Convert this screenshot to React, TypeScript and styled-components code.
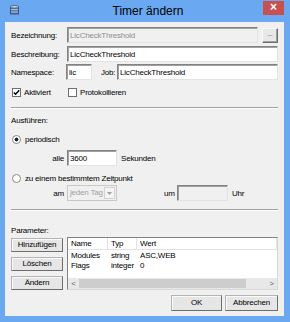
import React from 'react';
import styled, { createGlobalStyle } from 'styled-components';

const GlobalStyle = createGlobalStyle`
  html, body {
    margin: 0;
    padding: 0;
    background: #ffffff;
  }
  body {
    font-family: "Liberation Sans", Arial, sans-serif;
    font-size: 8px;
    letter-spacing: -0.2px;
    color: #000;
  }
`;

const params = [
  { name: 'Modules', type: 'string', value: 'ASC,WEB' },
  { name: 'Flags', type: 'integer', value: '0' },
];

const App: React.FC = () => {
  return (
    <>
      <GlobalStyle />
      <Window>
        <TitleBar>
          <AppIcon width="9" height="10" viewBox="0 0 9 10">
            <rect x="0.5" y="1.5" width="8" height="7.5" fill="#5f7fa8" stroke="#3d5273" strokeWidth="1" />
            <ellipse cx="4.5" cy="1.8" rx="4" ry="1.3" fill="#c9d6e6" stroke="#3d5273" strokeWidth="0.8" />
            <rect x="1" y="4" width="7" height="1" fill="#9fc0e8" />
            <rect x="1" y="6.5" width="7" height="1" fill="#9fc0e8" />
          </AppIcon>
          <Title>Timer ändern</Title>
          <CloseButton>×</CloseButton>
        </TitleBar>

        <Client>
          <FieldRow $top={5}>
            <Label $width={56}>Bezeichnung:</Label>
            <TextBox readOnly disabled value="LicCheckThreshold" />
            <SmallButton>...</SmallButton>
          </FieldRow>

          <FieldRow $top={3}>
            <Label $width={56}>Beschreibung:</Label>
            <TextBox readOnly value="LicCheckThreshold" />
          </FieldRow>

          <FieldRow $top={2}>
            <Label $width={55}>Namespace:</Label>
            <TextBox readOnly value="lic" $width={26} />
            <Label $width={16} $left={9}>Job:</Label>
            <TextBox readOnly value="LicCheckThreshold" />
          </FieldRow>

          <CheckRow>
            <CheckItem $width={56}>
              <CheckBox>
                <svg width="7" height="7" viewBox="0 0 7 7">
                  <path d="M0.8 3.4 L2.6 5.3 L6.2 1.2" fill="none" stroke="#000" strokeWidth="1.4" />
                </svg>
              </CheckBox>
              Aktiviert
            </CheckItem>
            <CheckItem>
              <CheckBox />
              Protokollieren
            </CheckItem>
          </CheckRow>

          <Separator $top={8} />

          <SectionLabel $top={7}>Ausführen:</SectionLabel>

          <RadioRow $top={7}>
            <Radio $checked />
            periodisch
          </RadioRow>

          <FieldRow $top={5}>
            <Label $width={56} $align="right">alle</Label>
            <TextBox readOnly value="3600" $width={50} />
            <Label $left={4}>Sekunden</Label>
          </FieldRow>

          <RadioRow $top={6}>
            <Radio />
            zu einem bestimmtem Zeitpunkt
          </RadioRow>

          <FieldRow $top={1}>
            <Label $width={56} $align="right">am</Label>
            <Combo>
              <ComboText>jeden Tag</ComboText>
              <ComboArrow>
                <svg width="5" height="3" viewBox="0 0 5 3">
                  <path d="M0 0 L5 0 L2.5 3 Z" fill="#a0a0a0" />
                </svg>
              </ComboArrow>
            </Combo>
            <Label $left={47} $width={13}>um</Label>
            <TextBox readOnly disabled value="" $width={51} />
            <Label $left={4}>Uhr</Label>
          </FieldRow>

          <Separator $top={8} />

          <SectionLabel $top={15}>Parameter:</SectionLabel>

          <ParamArea>
            <ButtonColumn>
              <SideButton>Hinzufügen</SideButton>
              <SideButton>Löschen</SideButton>
              <SideButton>Ändern</SideButton>
            </ButtonColumn>

            <ListView>
              <ListHeader>
                <HeaderCell $width={40}>Name</HeaderCell>
                <HeaderCell $width={29}>Typ</HeaderCell>
                <HeaderCell>Wert</HeaderCell>
              </ListHeader>
              <ListBody>
                {params.map(p => (
                  <ListRow key={p.name}>
                    <Cell $width={40}>{p.name}</Cell>
                    <Cell $width={29}>{p.type}</Cell>
                    <Cell>{p.value}</Cell>
                  </ListRow>
                ))}
              </ListBody>
              <HScroll>
                <ScrollArrow>&lt;</ScrollArrow>
                <ScrollThumb />
                <ScrollTrack />
                <ScrollArrow>&gt;</ScrollArrow>
              </HScroll>
            </ListView>
          </ParamArea>

          <Footer>
            <DialogButton $width={51}>OK</DialogButton>
            <DialogButton $width={53}>Abbrechen</DialogButton>
          </Footer>
        </Client>
      </Window>
    </>
  );
};

const Window = styled.div`
  width: 290px;
  height: 322px;
  box-sizing: border-box;
  background: #6aa9f1;
  display: flex;
  flex-direction: column;
  padding: 0 6px 6px 5px;
`;

const TitleBar = styled.div`
  height: 22px;
  display: flex;
  align-items: flex-start;
  flex-shrink: 0;
`;

const AppIcon = styled.svg`
  margin: 5px 0 0 5px;
  flex-shrink: 0;
`;

const Title = styled.div`
  flex: 1;
  text-align: center;
  font-size: 12px;
  letter-spacing: 0;
  line-height: 12px;
  padding: 5px 0 0 14px;
  color: #000;
`;

const CloseButton = styled.div`
  width: 21px;
  height: 14px;
  margin-top: 1px;
  background: #c75050;
  color: #fff;
  font-size: 12px;
  letter-spacing: 0;
  line-height: 13px;
  font-weight: bold;
  text-align: center;
`;

const Client = styled.div`
  flex: 1;
  background: #f0f0f0;
  padding: 0 6px 0 6px;
  display: flex;
  flex-direction: column;
`;

const FieldRow = styled.div<{ $top: number }>`
  display: flex;
  align-items: center;
  height: 16px;
  margin-top: ${p => p.$top}px;
`;

const Label = styled.span<{ $width?: number; $left?: number; $align?: string }>`
  flex-shrink: 0;
  width: ${p => (p.$width ? `${p.$width}px` : 'auto')};
  margin-left: ${p => p.$left || 0}px;
  padding-right: ${p => (p.$align === 'right' ? 3 : 0)}px;
  box-sizing: border-box;
  text-align: ${p => p.$align || 'left'};
  white-space: nowrap;
`;

const TextBox = styled.input<{ $width?: number }>`
  box-sizing: border-box;
  height: 16px;
  min-width: 0;
  flex: ${p => (p.$width ? `0 0 ${p.$width}px` : '1')};
  width: ${p => (p.$width ? `${p.$width}px` : 'auto')};
  margin: 0;
  padding: 0 2px;
  font: inherit;
  letter-spacing: inherit;
  color: #000;
  background: #fff;
  border: 1px solid;
  border-color: #828282 #e3e3e3 #e3e3e3 #828282;
  box-shadow: inset 1px 1px 0 #a0a0a0;
  outline: none;

  &:disabled {
    background: #f0f0f0;
    color: #8d8d8d;
  }
`;

const SmallButton = styled.div`
  box-sizing: border-box;
  width: 16px;
  height: 15px;
  margin-left: 4px;
  align-self: flex-end;
  background: #e8e8e8;
  border: 1px solid;
  border-color: #f8f8f8 #6d6d6d #6d6d6d #f8f8f8;
  box-shadow: inset -1px -1px 0 #a0a0a0;
  font-size: 7px;
  line-height: 9px;
  text-align: center;
  color: #555;
`;

const CheckRow = styled.div`
  display: flex;
  align-items: center;
  height: 14px;
  margin-top: 5px;
`;

const CheckItem = styled.label<{ $width?: number }>`
  display: flex;
  align-items: center;
  width: ${p => (p.$width ? `${p.$width}px` : 'auto')};
  white-space: nowrap;
`;

const CheckBox = styled.span`
  box-sizing: border-box;
  width: 9px;
  height: 9px;
  margin: 0 3px 0 1px;
  display: flex;
  align-items: center;
  justify-content: center;
  background: #fff;
  border: 1px solid #6f6f6f;
`;

const Separator = styled.div<{ $top: number }>`
  margin-top: ${p => p.$top}px;
  height: 0;
  border-top: 1px solid #a0a0a0;
  border-bottom: 1px solid #ffffff;
`;

const SectionLabel = styled.div<{ $top: number }>`
  margin-top: ${p => p.$top}px;
  height: 10px;
  line-height: 10px;
`;

const RadioRow = styled.div<{ $top: number }>`
  display: flex;
  align-items: center;
  height: 12px;
  margin-top: ${p => p.$top}px;
  white-space: nowrap;
`;

const Radio = styled.span<{ $checked?: boolean }>`
  box-sizing: border-box;
  width: 9px;
  height: 9px;
  margin: 0 4px 0 1px;
  border-radius: 50%;
  border: 1px solid #8a8a8a;
  background: ${p => (p.$checked ? 'radial-gradient(circle, #222 0 1.8px, #fff 2.2px)' : '#fff')};
`;

const Combo = styled.div`
  box-sizing: border-box;
  width: 50px;
  height: 16px;
  display: flex;
  align-items: stretch;
  background: #f0f0f0;
  border: 1px solid #c8c8c8;
`;

const ComboText = styled.span`
  flex: 1;
  min-width: 0;
  padding-left: 2px;
  line-height: 14px;
  color: #a0a0a0;
  white-space: nowrap;
`;

const ComboArrow = styled.span`
  flex: 0 0 11px;
  margin: 1px;
  box-sizing: border-box;
  display: flex;
  align-items: center;
  justify-content: center;
  border: 1px solid #d2d2d2;
  background: #f4f4f4;
`;

const ParamArea = styled.div`
  display: flex;
  margin-top: 1px;
  gap: 4px;
`;

const ButtonColumn = styled.div`
  width: 52px;
  display: flex;
  flex-direction: column;
  gap: 5px;
  padding-top: 1px;
`;

const ButtonBase = styled.div`
  box-sizing: border-box;
  background: #e6e6e6;
  border: 1px solid;
  border-color: #b4b4b4 #6d6d6d #6d6d6d #b4b4b4;
  box-shadow: inset 1px 1px 0 #fafafa;
  text-align: center;
  white-space: nowrap;
`;

const SideButton = styled(ButtonBase)`
  height: 14px;
  line-height: 12px;
`;

const ListView = styled.div`
  flex: 1;
  height: 53px;
  box-sizing: border-box;
  display: flex;
  flex-direction: column;
  background: #fff;
  border: 1px solid;
  border-color: #828282 #d8d8d8 #d8d8d8 #828282;
`;

const ListHeader = styled.div`
  display: flex;
  height: 11px;
  border-bottom: 1px solid #e2e2e2;
`;

const HeaderCell = styled.div<{ $width?: number }>`
  box-sizing: border-box;
  width: ${p => (p.$width ? `${p.$width}px` : 'auto')};
  flex: ${p => (p.$width ? '0 0 auto' : '1')};
  padding-left: 3px;
  line-height: 11px;
  border-right: 1px solid #e2e2e2;
`;

const ListBody = styled.div`
  flex: 1;
  padding-top: 1px;
`;

const ListRow = styled.div`
  display: flex;
  height: 10px;
  line-height: 10px;
`;

const Cell = styled.div<{ $width?: number }>`
  width: ${p => (p.$width ? `${p.$width}px` : 'auto')};
  flex: ${p => (p.$width ? '0 0 auto' : '1')};
  padding-left: 3px;
  box-sizing: border-box;
  white-space: nowrap;
`;

const HScroll = styled.div`
  display: flex;
  height: 11px;
  background: #e8e8e8;
`;

const ScrollArrow = styled.div`
  width: 11px;
  line-height: 11px;
  text-align: center;
  font-size: 8px;
  color: #606060;
`;

const ScrollThumb = styled.div`
  flex: 0 0 167px;
  margin: 1px 0;
  background: #cdcdcd;
`;

const ScrollTrack = styled.div`
  flex: 1;
`;

const Footer = styled.div`
  display: flex;
  justify-content: flex-end;
  gap: 3px;
  margin-top: 5px;
`;

const DialogButton = styled(ButtonBase)<{ $width: number }>`
  width: ${p => p.$width}px;
  height: 16px;
  line-height: 14px;
`;

export default App;
